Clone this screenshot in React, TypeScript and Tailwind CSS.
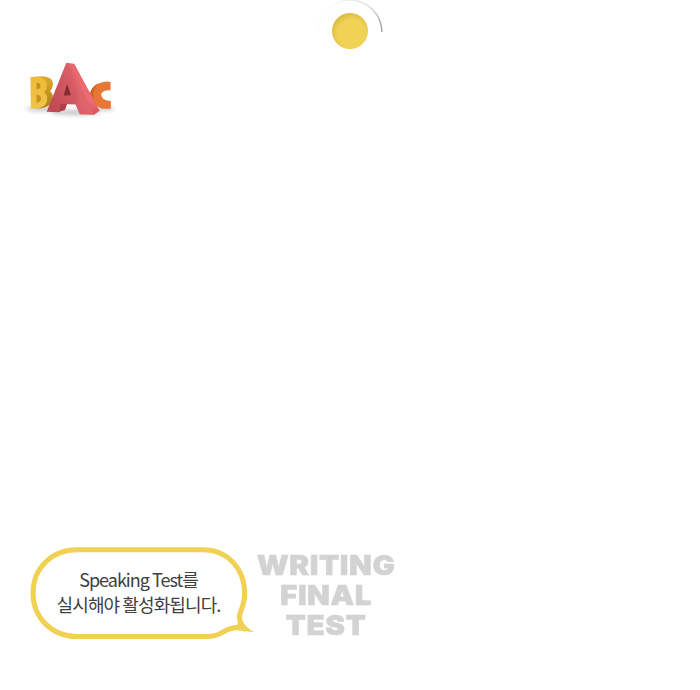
function Pointer() {
  return (
    <svg className="mx-auto block" width="70" height="52" viewBox="315 0 70 52" aria-hidden="true">
      <defs>
        <linearGradient id="arc" x1="318" x2="383" y1="0" y2="0" gradientUnits="userSpaceOnUse">
          <stop offset="0" stopColor="#f4f4f4" />
          <stop offset="0.5" stopColor="#e8e8e8" />
          <stop offset="0.85" stopColor="#cccccc" />
          <stop offset="1" stopColor="#999999" />
        </linearGradient>
        <radialGradient id="disc" cx="352" cy="34" r="22" gradientUnits="userSpaceOnUse">
          <stop offset="0.65" stopColor="#f0d255" />
          <stop offset="1" stopColor="#d8b944" />
        </radialGradient>
      </defs>
      <path d="M318 32A32.3 32.3 0 0 1 382.6 32H381.2A31.4 31.4 0 0 0 318.4 32Z" fill="url(#arc)" />
      <circle cx="350" cy="31" r="18" fill="url(#disc)" />
    </svg>
  );
}

function Logo() {
  return (
    <svg className="block" width="105" height="66" viewBox="20 58 105 66" role="img" aria-label="BAC">
      <defs>
        <filter id="soft" x="-30%" y="-150%" width="160%" height="400%">
          <feGaussianBlur stdDeviation="2" />
        </filter>
        <linearGradient id="bFront" x1="0" y1="0" x2="0" y2="1">
          <stop offset="0" stopColor="#eebb39" />
          <stop offset="1" stopColor="#efc548" />
        </linearGradient>
        <linearGradient id="bSide" x1="0" y1="0" x2="0" y2="1">
          <stop offset="0" stopColor="#dfaa30" />
          <stop offset="1" stopColor="#b07c18" />
        </linearGradient>
        <linearGradient id="aFront" x1="52" y1="108" x2="84" y2="88" gradientUnits="userSpaceOnUse">
          <stop offset="0" stopColor="#c04b54" />
          <stop offset="1" stopColor="#dc6067" />
        </linearGradient>
        <linearGradient id="aSide" x1="0" y1="0" x2="0" y2="1">
          <stop offset="0" stopColor="#e8686e" />
          <stop offset="0.75" stopColor="#ee6b71" />
          <stop offset="1" stopColor="#d3535b" />
        </linearGradient>
      </defs>
      <ellipse cx="44" cy="109" rx="18" ry="2.5" fill="#777" opacity="0.4" filter="url(#soft)" />
      <ellipse cx="76" cy="112.5" rx="24" ry="2.5" fill="#777" opacity="0.45" filter="url(#soft)" />
      <ellipse cx="104" cy="108.5" rx="10" ry="2" fill="#777" opacity="0.45" filter="url(#soft)" />
      <path d="M31 77L43 76.3Q52 77 53 83Q53 88 50 91Q54 94 52.5 101Q50 107 40 108.5L31 108Z" fill="url(#bSide)" />
      <path d="M30.5 77L39 77.3Q46.8 79 46.8 85Q46.8 90 44 92Q48 95 47 101Q45.5 107.5 38 108.2L30.8 108.5Z" fill="url(#bFront)" />
      <path d="M36.5 82.5Q40.5 82.5 40.5 86Q40.5 89.3 36.5 89.3ZM36.5 94.8Q41 94.8 41 98.6Q41 102.7 36.5 102.7Z" fill="#c98f1f" />
      <path d="M89.5 95Q92 83.5 103.5 82Q108 81 110.6 82.2V90.3Q103 89.5 101 94.5Q102 101 110.8 101V108.8H102L91 103Z" fill="#e77737" />
      <path d="M89.5 95Q92 86 98 83.5Q92 91 93.5 98L97 106L91 103Z" fill="#cf6429" />
      <path d="M57.7 112.3L65 110L67 104H60Z" fill="#b03d47" />
      <path d="M66.3 62.7L74.2 63.8L99.8 110.7L94 114.8L88 113Z" fill="url(#aSide)" />
      <path d="M66.3 62.7L70 64.5L94 114.8L79.8 114.2L75.5 104.4L61 104L57.7 112.3L46.7 111.7Z" fill="url(#aFront)" />
      <path d="M70 64.5L94 114.8L79.8 114.2L75.8 104.8L78 95Z" fill="#ee747a" opacity="0.3" />
      <path d="M67 84L63.7 95.4L71 95.2Z" fill="#822b33" />
    </svg>
  );
}

function SpeechBubble() {
  return (
    <div className="relative h-[96px] w-[226px]">
      <svg className="absolute inset-0" width="226" height="96" viewBox="29 545 226 96" aria-hidden="true">
        <path d="M77 549.7H203C227 549.7 244.7 568 244.7 594C244.7 607 239.2 611 239.4 617.5C239.5 623 241.5 625.5 245 629C238 626.5 230 627.8 223 632C218 635.5 214 636.5 207 636.5H77C52 636.5 33 618 33 593C33 568 52 549.7 77 549.7Z" fill="white" stroke="#f0d154" strokeWidth="5" strokeLinejoin="round" />
        <path d="M238 622L242 620Q245.5 627.5 254.3 632.2Q245 631 236 629.5Z" fill="#f0d154" />
      </svg>
      <p className="relative pt-[22px] pr-[7px] text-center font-['Noto_Sans_CJK_KR',sans-serif] text-[18px] leading-[25px] tracking-[-0.9px] text-[#404040]">
        <span className="tracking-[-1px]">Speaking Test를</span>
        <br />
        실시해야 활성화됩니다.
      </p>
    </div>
  );
}

export default function App() {
  return (
    <main className="h-[690px] w-[700px] overflow-hidden bg-white">
      <header className="h-[58px]"><Pointer /></header>
      <div className="h-[487px] pl-5"><Logo /></div>
      <section className="flex items-start pl-[29px]">
        <SpeechBubble />
        <h1 className="ml-px w-[140px] scale-x-[1.08] pt-[5px] text-center font-['Inter',sans-serif] text-[27.5px] leading-[30px] font-black tracking-[0.5px] text-[#d3d3d3] [-webkit-text-stroke:0.5px_#d3d3d3]">
          WRITING
          <br />
          FINAL
          <br />
          TEST
        </h1>
      </section>
    </main>
  );
}
